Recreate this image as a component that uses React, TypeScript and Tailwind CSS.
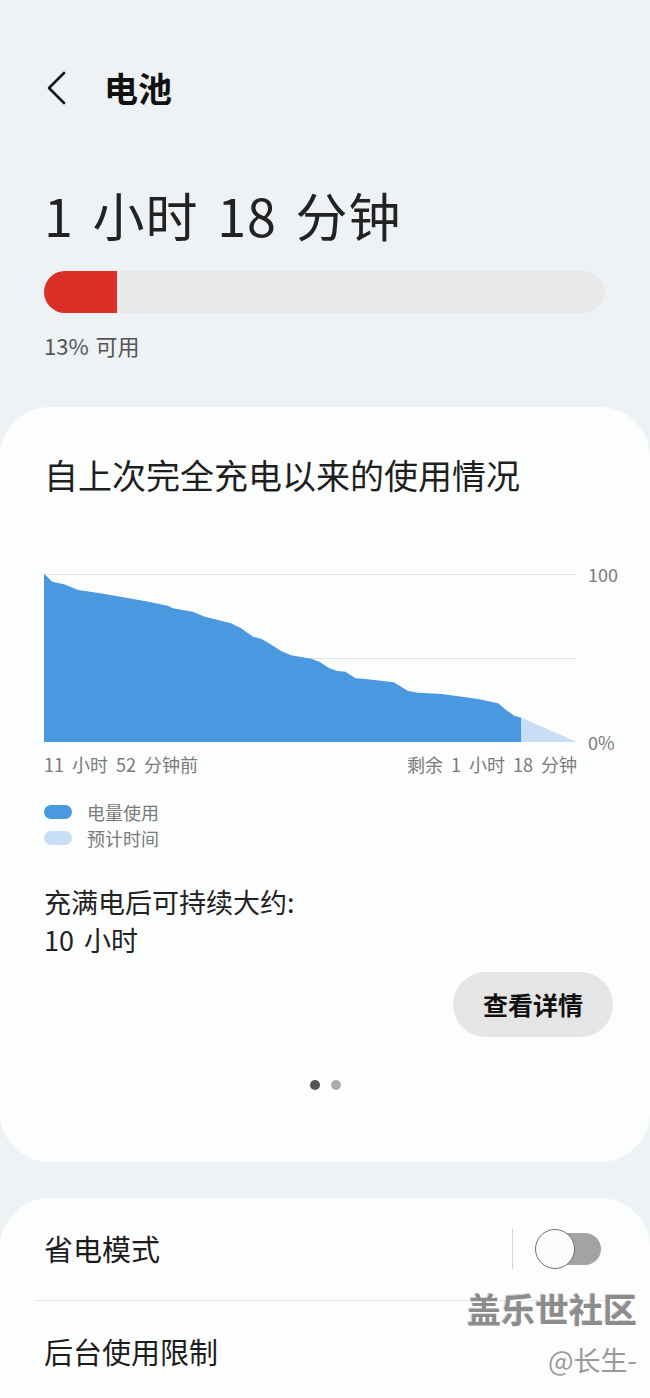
import React from 'react';

const usage: [number, number][] = [
    [0, 0], [3.3, 2.7], [8.1, 7.7], [20.2, 10.3], [26.2, 12.7], [34.3, 16], [56.4, 19.3],
    [76.4, 22.7], [104.6, 27.7], [124.7, 32], [128.7, 34.3], [148.8, 37.7], [160.8, 42.7],
    [186.9, 49.3], [197, 54.3], [209, 62.7], [217, 64.7], [225, 69.3], [237, 77], [247.2, 81.3],
    [267.3, 84.7], [275.3, 87.7], [285.4, 94.3], [293.4, 97], [301.4, 97.7], [311.5, 104.3],
    [321.5, 105], [349.6, 108.3], [363.7, 116.7], [373.7, 118.7], [397.9, 120], [434, 125],
    [454.1, 129.3], [462.1, 136], [470.2, 141.7], [477.4, 143.7],
];

function UsageChart() {
    const area = 'M0 168 ' + usage.map(([x, y]) => `L${x} ${y}`).join(' ') + ' L477.4 168 Z';
    return (
        <div className="flex items-start">
            <svg width="533" height="168" viewBox="0 0 533 168" className="block shrink-0">
                <line x1="0" y1="0.5" x2="533" y2="0.5" stroke="#e2e2e2" strokeWidth="1" />
                <line x1="0" y1="84.5" x2="533" y2="84.5" stroke="#e2e2e2" strokeWidth="1" />
                <path d={area} fill="#4a98e0" />
                <path d="M477.4 143.7 L533 168 L477.4 168 Z" fill="#c9def4" />
            </svg>
            <div className="-mb-[12px] ml-[11px] -mt-[12px] flex h-[192px] flex-col justify-between text-[18px] leading-[24px] text-[#7a7a7a]">
                <span>100</span>
                <span>0%</span>
            </div>
        </div>
    );
}

export default function App() {
    return (
        <div className="relative min-h-[1398px] overflow-hidden bg-[#eef2f4] font-['Noto_Sans_CJK_SC','Noto_Sans',sans-serif] text-[#1c1c1c]">
            <header className="mt-[64px] flex h-[48px] items-center pl-[45px]">
                <svg width="22" height="34" viewBox="0 0 22 34" fill="none" className="block">
                    <polyline points="19,2 4,17 19,32" stroke="#141414" strokeWidth="2.6" strokeLinecap="round" strokeLinejoin="round" />
                </svg>
                <h1 className="ml-[37px] text-[34px] font-bold leading-none text-[#111]">电池</h1>
            </header>

            <div className="mt-[73px] px-[44px]">
                <div className="text-[52px] leading-[60px] tracking-[1px] text-[#222] [word-spacing:6px]">1 小时 18 分钟</div>
                <div className="mt-[26px] h-[42px] w-[561px] overflow-hidden rounded-full bg-[#e9e9e9]">
                    <div className="h-full w-[13%] bg-[#da3027]" />
                </div>
                <div className="mt-[18px] text-[22px] leading-[28px] text-[#555] [word-spacing:2px]">13% 可用</div>
            </div>

            <section className="mt-[48px] rounded-[50px] bg-[#fcfdfd] px-[44px] pb-[72px] pt-[46px]">
                <h2 className="text-[34px] leading-[44px] text-[#1f1f1f]">自上次完全充电以来的使用情况</h2>
                <div className="mt-[77px]">
                    <UsageChart />
                </div>
                <div className="mt-[10px] flex w-[533px] justify-between text-[18px] leading-[24px] text-[#7a7a7a] [word-spacing:4px]">
                    <span>11 小时 52 分钟前</span>
                    <span>剩余 1 小时 18 分钟</span>
                </div>
                <div className="mt-[23px] text-[18px] leading-[26px] text-[#7a7a7a]">
                    <div className="flex items-center">
                        <span className="h-[14px] w-[28px] rounded-full bg-[#4a98e0]" />
                        <span className="ml-[15px]">电量使用</span>
                    </div>
                    <div className="flex items-center">
                        <span className="h-[14px] w-[28px] rounded-full bg-[#c9def4]" />
                        <span className="ml-[15px]">预计时间</span>
                    </div>
                </div>
                <div className="mt-[32px] text-[27px] leading-[38px] text-[#222] [word-spacing:4px]">
                    <div>充满电后可持续大约:</div>
                    <div>10 小时</div>
                </div>
                <div className="mt-[13px] flex justify-end">
                    <button type="button" className="-mr-[7px] h-[65px] rounded-full bg-[#e5e5e5] px-[30px] text-[25px] font-bold text-[#111]">
                        查看详情
                    </button>
                </div>
                <div className="mt-[43px] flex justify-center gap-[11px]">
                    <span className="h-[10px] w-[10px] rounded-full bg-[#555]" />
                    <span className="h-[10px] w-[10px] rounded-full bg-[#ababab]" />
                </div>
            </section>

            <section className="mt-[36px] rounded-t-[50px] bg-[#fcfdfd]">
                <div className="flex h-[102px] items-center pl-[44px] pr-[49px]">
                    <span className="flex-1 text-[29px] text-[#1c1c1c]">省电模式</span>
                    <span className="h-[40px] w-px bg-[#d6d6d6]" />
                    <span className="relative ml-[22px] flex h-[40px] w-[66px] items-center">
                        <span className="absolute right-0 h-[32px] w-[60px] rounded-full bg-[#a3a3a3]" />
                        <span className="absolute left-0 h-[40px] w-[40px] rounded-full border-[1.5px] border-[#6f6f6f] bg-[#fcfcfc]" />
                    </span>
                </div>
                <div className="mx-[36px] h-px bg-[#e3e3e3]" />
                <div className="flex h-[102px] items-center pl-[44px]">
                    <span className="text-[29px] text-[#1c1c1c]">后台使用限制</span>
                </div>
            </section>

            <div className="pointer-events-none absolute right-[13px] top-[1287px] flex flex-col items-end">
                <span className="text-[34px] font-bold leading-[44px] text-[#8c8c8c] [text-shadow:2px_2px_0_#ffffff,-1px_-1px_0_#d0d0d0]">盖乐世社区</span>
                <span className="mt-[12px] text-[27px] leading-[34px] text-[#9a9a9a]">@长生-</span>
            </div>
        </div>
    );
}
